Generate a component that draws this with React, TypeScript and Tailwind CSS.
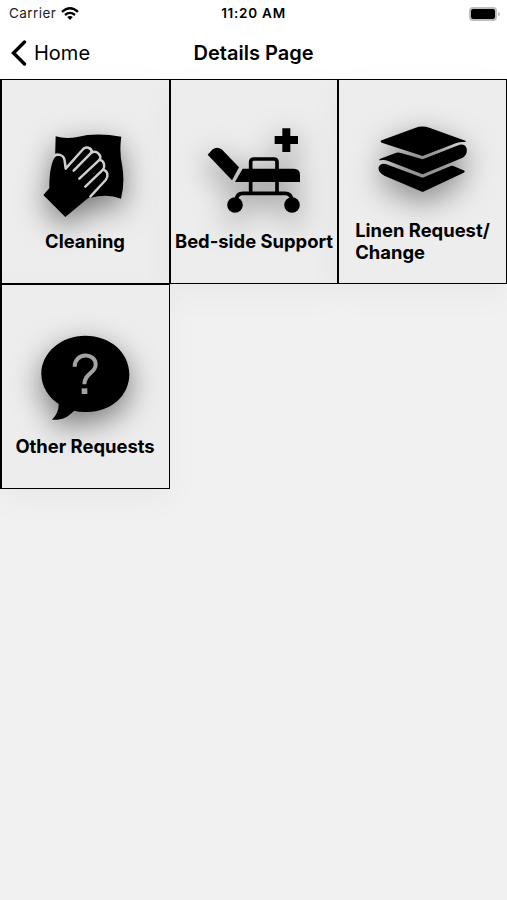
import type { ReactNode } from 'react'

type Tile = {
  label: string
  icon: ReactNode
  frame: string
}

function CleaningIcon() {
  return (
    <svg viewBox="-12 -24 354 354" className="size-[118px] overflow-visible">
      <path d="M77 49 Q106 58 142 51 Q198 37 274 50 Q267 96 277 140 Q285 190 273 236 Q232 220 180 234 L90 210 L75 120 Z" />
      <path d="M74 112 C80 101 100 102 104 122 L107 146 L157 90 C166 77 186 83 185 97 C201 91 216 106 209 119 C223 122 226 139 219 149 C234 153 236 168 227 180 L181 229 L106 291 L40 225 L58 205 C58 173 60 137 74 112 Z" />
      <g fill="none" stroke="#cfcfcf" strokeWidth="7.5" strokeLinecap="round" strokeLinejoin="round">
        <path d="M72 109 C79 101 101 101 104 122 L107 146 L157 90 C166 77 186 83 185 97 C201 91 216 106 209 119 C223 122 226 139 219 149 C234 153 236 168 227 180 L181 230" />
        <path d="M185 97 L131 152 M209 119 L148 176 M219 149 L166 200" />
      </g>
    </svg>
  )
}

function BedIcon() {
  return (
    <svg viewBox="0 -24 354 354" className="size-[118px] overflow-visible">
      <path d="M262 25 H286 V48 H309 V72 H286 V96 H262 V72 H239 V48 H262 Z" />
      <path d="M38 104 L53 88 Q66 78 80 88 L132 142 L111 181 Z" />
      <path d="M143 146 H296 Q315 146 315 165 V186 H120 Z" />
      <path
        d="M167 218 V126 Q167 117 177 117 H236 Q246 117 246 126 V218 M124 240 Q125 220 144 220 H270 Q288 220 291 240"
        fill="none"
        stroke="black"
        strokeWidth="11"
      />
      <circle cx="120" cy="255" r="23.5" />
      <circle cx="291" cy="255" r="23.5" />
    </svg>
  )
}

function LinenIcon() {
  return (
    <svg viewBox="-3 -42 354 354" className="size-[118px] overflow-visible">
      <path d="M50 76 L150 39 Q171 31 193 38 L301 77 Q307 81 298 81 Q285 80 272 85 L173 123 L50 83 Q44 79 50 76 Z" />
      <path d="M46 131 L94 113 Q101 111 108 114 L173 133 L284 89 Q301 86 305 101 Q308 119 293 128 L173 178 L68 137 Q58 133 44 136 Q40 135 46 131 Z" />
      <path d="M62 147 L173 188 L257 153 Q262 151 267 154 L295 166 Q303 169 296 173 L173 231 L58 182 Q38 172 41 157 Q46 143 62 147 Z" />
    </svg>
  )
}

function QuestionIcon() {
  return (
    <svg viewBox="3 -24 354 354" className="size-[118px] overflow-visible">
      <path d="M181 32 C255 32 313 82 313 148 C313 213 257 261 187 261 Q164 262 147 257 C128 278 108 286 81 284 Q102 263 101 237 C70 216 49 184 49 146 C49 83 108 32 181 32 Z" />
      <path
        d="M149 125 C149 82 212 81 212 119 C212 144 178 145 178 178"
        fill="none"
        stroke="#a3a3a3"
        strokeWidth="12"
      />
      <path d="M170 190 H187 V207 H170 Z" fill="#a3a3a3" />
    </svg>
  )
}

const tiles: Tile[] = [
  { label: 'Cleaning', icon: <CleaningIcon />, frame: 'border-l-2 pr-px' },
  { label: 'Bed-side Support', icon: <BedIcon />, frame: '' },
  { label: 'Linen Request/\nChange', icon: <LinenIcon />, frame: '' },
  { label: 'Other Requests', icon: <QuestionIcon />, frame: 'border-l-2 pr-px' },
]

function StatusBar() {
  return (
    <div className="grid h-[27px] grid-cols-3 items-center px-[9px]">
      <div className="flex items-center gap-[5px] text-[#222]">
        <span className="text-[13.5px] tracking-[0.45px]">Carrier</span>
        <svg viewBox="0 0 18 14" className="h-[14px] w-[18px]">
          <path
            d="M1 4.8 Q9 -2.2 17 4.8 M4 8 Q9 3.8 14 8"
            fill="none"
            stroke="black"
            strokeWidth="2.3"
          />
          <path d="M6.2 10.1 Q9 8 11.8 10.1 L9 13 Z" />
        </svg>
      </div>
      <span className="text-center text-[13.5px] font-semibold tracking-[0.75px]">11:20 AM</span>
      <div className="flex items-center justify-end gap-px">
        <div className="h-[14px] w-[28px] rounded-[4px] border-2 border-[#bdbdbd]">
          <div className="h-full rounded-[2px] bg-black" />
        </div>
        <div className="-mr-[2px] h-1 w-[2px] rounded-r-full bg-[#bdbdbd]" />
      </div>
    </div>
  )
}

export default function App() {
  return (
    <main className="min-h-[900px] w-full bg-[#f1f1f1] font-['Inter',sans-serif] text-black">
      <header className="h-[79px] bg-white">
        <StatusBar />
        <div className="grid h-[52px] grid-cols-3 items-center px-[11px]">
          <button className="flex items-center gap-[7px] text-[20px]">
            <svg viewBox="0 0 16 26" className="h-[26px] w-4">
              <path d="M13.5 2 L2.5 13 L13.5 24" fill="none" stroke="black" strokeWidth="3.4" strokeLinecap="round" />
            </svg>
            <span>Home</span>
          </button>
          <h1 className="text-center text-[20px] font-semibold whitespace-nowrap">
            Details Page
          </h1>
        </div>
      </header>

      <div className="grid grid-cols-[170px_168px_169px]">
        {tiles.map((tile) => (
          <div
            key={tile.label}
            className={`flex h-[205px] flex-col items-center justify-center border border-black bg-[#ededed] shadow-[0_10px_34px_rgba(0,0,0,0.04)] ${tile.frame}`}
          >
            <div className="drop-shadow-[0_10px_15px_rgba(0,0,0,0.5)]">{tile.icon}</div>
            <div className="text-[18.4px] leading-[22px] font-bold whitespace-pre">
              {tile.label}
            </div>
          </div>
        ))}
      </div>
    </main>
  )
}
